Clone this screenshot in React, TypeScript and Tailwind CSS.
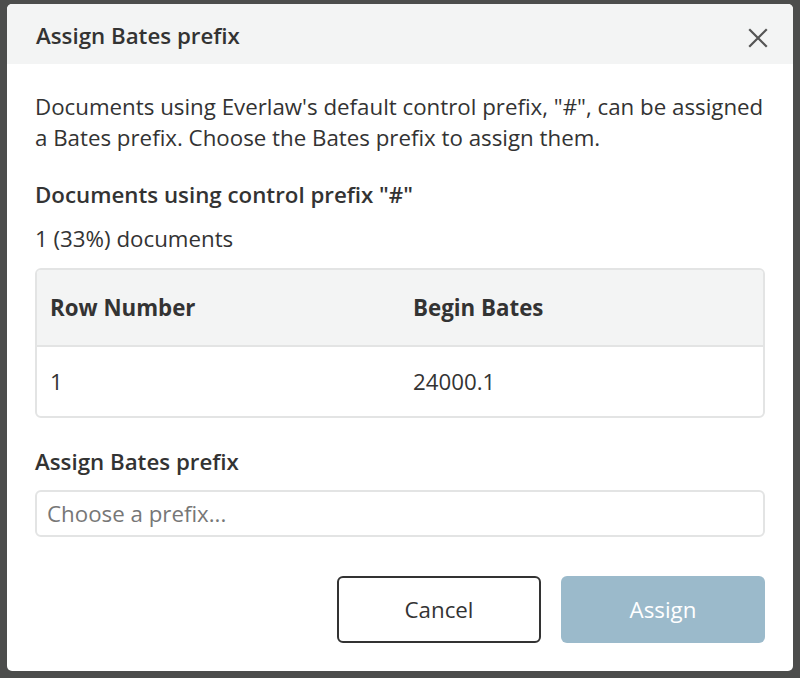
import React from 'react';

const App: React.FC = () => {
  return (
    <div
      className="w-[800px] h-[678px] bg-[#4c4d4c] pt-[4px] pl-[7px] overflow-hidden"
      style={{ fontFamily: '"Open Sans", "Noto Sans", sans-serif' }}
    >
      <div className="w-[786px] h-[667px] bg-white rounded-[5px] overflow-hidden flex flex-col text-[#333]">
        <div className="h-[60px] bg-[#f3f4f4] flex items-center justify-between pl-[29px] pr-[24px] pt-[4px] shrink-0">
          <h2 className="text-[22.3px] font-semibold text-[#333] leading-[30px]">Assign Bates prefix</h2>
          <button className="w-[22px] h-[22px] mt-[4px] flex items-center justify-center text-[#555]">
            <svg width="20" height="20" viewBox="0 0 20 20" fill="none" stroke="currentColor" strokeWidth="2.2" strokeLinecap="square">
              <path d="M2 2 L18 18 M18 2 L2 18" />
            </svg>
          </button>
        </div>
        <div className="flex-1 flex flex-col px-[28px] pt-[27px]">
          <p className="w-[744px] text-[22.3px] leading-[31px] text-[#333]">
            Documents using Everlaw's default control prefix, "#", can be assigned a Bates prefix. Choose the Bates
            prefix to assign them.
          </p>
          <h3 className="mt-[27px] text-[22.3px] font-semibold leading-[30px]">Documents using control prefix "#"</h3>
          <div className="mt-[14px] text-[22.3px] leading-[30px]">1 (33%) documents</div>
          <div className="mt-[14px] border-2 border-[#e3e4e4] rounded-[6px] overflow-hidden">
            <div className="h-[77px] bg-[#f3f4f4] grid grid-cols-2 items-center border-b-2 border-[#e3e4e4] text-[22.3px] font-bold">
              <div className="pl-[13px]">Row Number</div>
              <div className="pl-[13px]">Begin Bates</div>
            </div>
            <div className="h-[69px] grid grid-cols-2 items-center text-[22.3px]">
              <div className="pl-[13px]">1</div>
              <div className="pl-[13px]">24000.1</div>
            </div>
          </div>
          <label className="mt-[29px] text-[22.3px] font-semibold leading-[30px]">Assign Bates prefix</label>
          <div className="mt-[13px] h-[47px] border-2 border-[#e3e4e4] rounded-[6px] flex items-center px-[10px] text-[22.3px] text-[#777]">
            Choose a prefix...
          </div>
          <div className="mt-[39px] flex justify-end gap-[20px]">
            <button className="w-[204px] h-[67px] border-2 border-[#333] rounded-[6px] text-[22.3px] text-[#333] bg-white">
              Cancel
            </button>
            <button className="w-[204px] h-[67px] rounded-[6px] text-[22.3px] text-white bg-[#9bbacb]">Assign</button>
          </div>
        </div>
      </div>
    </div>
  );
};

export default App;
